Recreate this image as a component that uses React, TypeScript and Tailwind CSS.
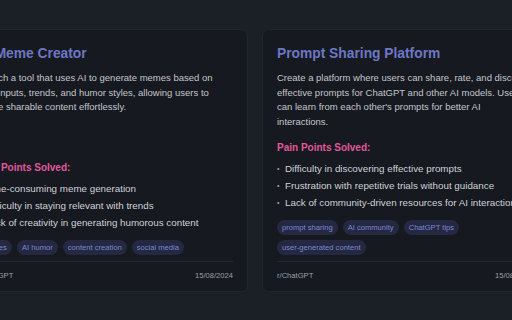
const ideas = [
  {
    title: 'AI Meme Creator',
    description:
      'Launch a tool that uses AI to generate memes based on user inputs, trends, and humor styles, allowing users to create sharable content effortlessly.',
    painPoints: [
      'Time-consuming meme generation',
      'Difficulty in staying relevant with trends',
      'Lack of creativity in generating humorous content',
    ],
    tags: ['memes', 'AI humor', 'content creation', 'social media'],
    source: 'r/ChatGPT',
    date: '15/08/2024',
  },
  {
    title: 'Prompt Sharing Platform',
    description:
      "Create a platform where users can share, rate, and discover effective prompts for ChatGPT and other AI models. Users can learn from each other's prompts for better AI interactions.",
    painPoints: [
      'Difficulty in discovering effective prompts',
      'Frustration with repetitive trials without guidance',
      'Lack of community-driven resources for AI interactions',
    ],
    tags: ['prompt sharing', 'AI community', 'ChatGPT tips', 'user-generated content'],
    source: 'r/ChatGPT',
    date: '15/08/2024',
  },
];

type Idea = (typeof ideas)[number];

function IdeaCard({ idea }: { idea: Idea }) {
  return (
    <div className="w-[286px] h-[263px] shrink-0 flex flex-col rounded-[7px] border border-[#21252c] bg-[#16191f] px-[14px] pt-[14px] pb-[10px]">
      <h2 className="text-[13.8px] leading-[20px] font-bold text-[#6d77c7] whitespace-nowrap">{idea.title}</h2>
      <p className="mt-[7px] text-[9.5px] leading-[14.5px] text-[#c3c6cc]">{idea.description}</p>

      <div className="mt-auto">
        <h3 className="text-[10px] leading-[14px] font-bold text-[#e0589c] whitespace-nowrap">Pain Points Solved:</h3>
        <ul className="mt-[7px] flex flex-col gap-[3px]">
          {idea.painPoints.map((p) => (
            <li key={p} className="flex items-center text-[9.8px] leading-[14px] text-[#cfd2d7] whitespace-nowrap">
              <span className="w-[8px] shrink-0 text-[7px] text-[#9a9ea6]">•</span>
              {p}
            </li>
          ))}
        </ul>
        <div className="mt-[10px] flex flex-wrap gap-[5px]">
          {idea.tags.map((t) => (
            <span
              key={t}
              className="h-[15px] flex items-center rounded-full bg-[#242941] px-[5px] text-[7.6px] font-medium text-[#7d87d4] whitespace-nowrap"
            >
              {t}
            </span>
          ))}
        </div>
        <div className="mt-[6px] border-t border-[#24282f] pt-[9px] flex justify-between text-[7.6px] leading-[10px] text-[#9ca0a8]">
          <span>{idea.source}</span>
          <span>{idea.date}</span>
        </div>
      </div>
    </div>
  );
}

export default function App() {
  return (
    <div
      className="w-[512px] h-[320px] overflow-hidden bg-[#1b1f26]"
      style={{ fontFamily: '"Liberation Sans", Arial, sans-serif' }}
    >
      <div className="flex gap-[14px] pt-[29px] ml-[-38px]">
        {ideas.map((idea) => (
          <IdeaCard key={idea.title} idea={idea} />
        ))}
      </div>
    </div>
  );
}
